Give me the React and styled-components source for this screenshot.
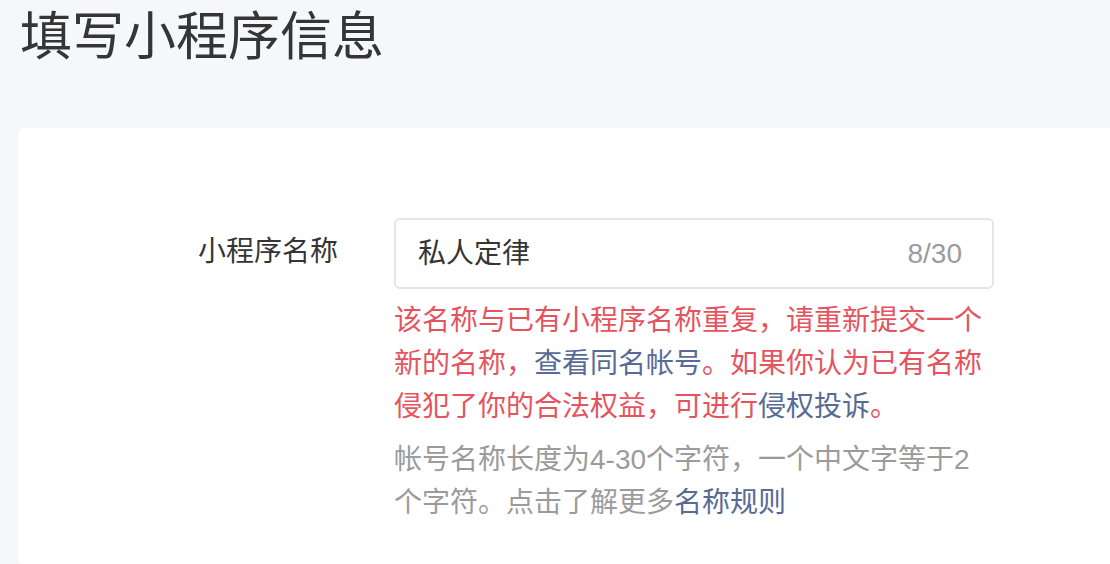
import React from 'react'
import styled, { createGlobalStyle } from 'styled-components'

const GlobalStyle = createGlobalStyle`
html, body {
  margin: 0;
  padding: 0;
  background-color: #f6f7f9;
}
body {
  font-family: "Liberation Sans", "Noto Sans CJK SC", sans-serif;
  overflow: hidden;
}
`

const Page = styled.div`
width: 1110px;
height: 564px;
overflow: hidden;
display: flex;
flex-direction: column;
padding-left: 18px;
box-sizing: border-box;
`

const Title = styled.h1`
margin: 0;
padding: 0 0 0 2px;
height: 128px;
font-size: 52px;
line-height: 74px;
font-weight: 400;
color: #353535;
`

const Card = styled.div`
flex: 1;
margin-right: -40px;
background-color: #ffffff;
border-radius: 6px;
padding-top: 90px;
`

const Row = styled.div`
display: flex;
align-items: flex-start;
gap: 56px;
`

const Label = styled.div`
width: 320px;
text-align: right;
font-size: 28px;
line-height: 67px;
color: #353535;
`

const Field = styled.div`
width: 600px;
display: flex;
flex-direction: column;
`

const InputBox = styled.div`
height: 71px;
box-sizing: border-box;
border: 2px solid #e4e4e9;
border-radius: 6px;
display: flex;
align-items: center;
justify-content: space-between;
padding: 0 30px 0 22px;
font-size: 28px;
`

const Value = styled.span`
color: #353535;
margin-bottom: 6px;
`

const Counter = styled.span`
color: #9b9b9b;
`

const Tip = styled.p`
margin: ${p => p.$top}px 0 0 0;
font-size: 28px;
line-height: 43px;
color: ${p => (p.$warn ? '#e5545e' : '#9b9b9b')};
`

const Link = styled.a`
color: #576b95;
text-decoration: none;
`

const App = () => {
  return (
    <>
      <GlobalStyle />
      <Page>
        <Title>填写小程序信息</Title>
        <Card>
          <Row>
            <Label>小程序名称</Label>
            <Field>
              <InputBox>
                <Value>私人定律</Value>
                <Counter>8/30</Counter>
              </InputBox>
              <Tip $warn $top={10}>
                该名称与已有小程序名称重复，请重新提交一个新的名称，<Link>查看同名帐号</Link>。如果你认为已有名称侵犯了你的合法权益，可进行<Link>侵权投诉</Link>。
              </Tip>
              <Tip $top={10}>
                帐号名称长度为4-30个字符，一个中文字等于2个字符。点击了解更多<Link>名称规则</Link>
              </Tip>
            </Field>
          </Row>
        </Card>
      </Page>
    </>
  )
}

export default App
